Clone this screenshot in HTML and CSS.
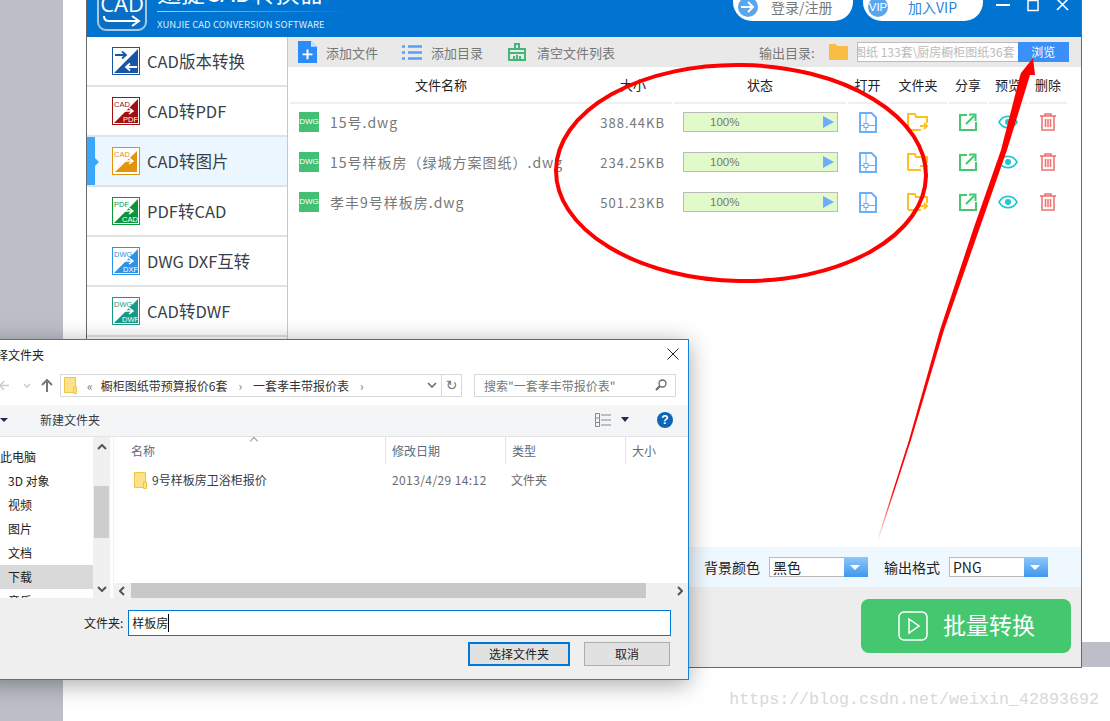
FILE: index.html

```html
<!DOCTYPE html>
<html lang="en">
<head>
  <meta charset="UTF-8">
  <title>迅捷CAD转换器</title>
  <link rel="stylesheet" href="styles.css">
</head>
<body>

<svg class="defs" width="0" height="0">
  <symbol id="i-open" viewBox="0 0 18 21"><path d="M1 1h11.500L17 5.500V20H1z" fill="none" stroke="#6aaefc" stroke-width="2"/><path d="M1 13.500h4M9 13.500h8M7 1v10M7 16v4" fill="none" stroke="#6aaefc"/><rect x="5" y="11.500" width="4" height="4" fill="#fff" stroke="#6aaefc"/></symbol>
  <symbol id="i-folder" viewBox="0 0 22 19"><path d="M1 17V1h7l1 3h11v6M1 17h13" fill="none" stroke="#ffc01f" stroke-width="2"/><path d="M13 13h6M17 10l3 3-3 3" fill="none" stroke="#ffc01f" stroke-width="2"/></symbol>
  <symbol id="i-share" viewBox="0 0 18 18"><path d="M8 2H1v15h16V9" fill="none" stroke="#44c76f" stroke-width="2"/><path d="M7 11l8-8M10 1.500h6.500V8" fill="none" stroke="#44c76f" stroke-width="2"/></symbol>
  <symbol id="i-eye" viewBox="0 0 20 14"><path d="M1 7c4-7.500 14-7.500 18 0-4 7.500-14 7.500-18 0z" fill="none" stroke="#20c6d2" stroke-width="1.600"/><circle cx="10" cy="7" r="3" fill="#20c6d2"/></symbol>
  <symbol id="i-trash" viewBox="0 0 16 18"><path d="M0 3h16M5 3V1h6v2M2 3v14h12V3M5.500 6v8M8 6v8M10.500 6v8" fill="none" stroke="#ef6c6c" stroke-width="1.500"/></symbol>
  <symbol id="i-yellow" viewBox="0 0 13 17"><path d="M.5.500h11v15H.5z" fill="#fde28c" stroke="#eec544"/><path d="M9.500 10h3v6.500h-3z" fill="#fde28c" stroke="#eec544"/></symbol>
</svg>

<div class="app">
  <header class="app-head">
    <div class="logo">
      <span class="logo-text">CAD</span>
      <svg width="40" height="12" viewBox="0 0 40 12"><path d="M2 1c0 4 2 5 5 5h28M30 1l7 5-7 5" fill="none" stroke="#fff" stroke-width="2"/></svg>
    </div>
    <div class="brand">
      <div class="brand-name">迅捷CAD转换器</div>
      <div class="brand-sub">XUNJIE CAD CONVERSION SOFTWARE</div>
    </div>
    <div class="pills">
      <div class="pill">
        <span class="pill-dot"><svg width="14" height="12" viewBox="0 0 14 12"><path d="M0 6h12M7 1l5 5-5 5" fill="none" stroke="#fff" stroke-width="2"/></svg></span>
        <span class="pill-login">登录/注册</span>
      </div>
      <div class="pill">
        <span class="pill-dot pill-vip">VIP</span>
        <span class="pill-join">加入VIP</span>
      </div>
    </div>
    <div class="win-btns">
      <svg width="14" height="14" viewBox="0 0 14 14"><path d="M0 7h14" stroke="#fff" stroke-width="2"/></svg>
      <svg width="12" height="14" viewBox="0 0 12 14"><path d="M1 2.500h10v10H1z" fill="none" stroke="#fff" stroke-width="1.500"/></svg>
      <svg width="13" height="14" viewBox="0 0 13 14"><path d="M1 1l11 11M12 1L1 12" stroke="#fff" stroke-width="1.600"/></svg>
    </div>
  </header>

  <div class="app-body">
    <nav class="side">
      <div class="side-item">
        <svg class="side-icon" viewBox="0 0 28 28"><rect x=".5" y=".5" width="27" height="27" fill="#fff" stroke="#1756a5"/><path d="M26 2v24H2z" fill="#1756a5"/><path d="M3 8h11M10 4.500L14 8l-4 3.500" fill="none" stroke="#1756a5" stroke-width="1.800"/><path d="M25 20H14M18 16.500L14 20l4 3.500" fill="none" stroke="#fff" stroke-width="1.800"/></svg>
        <span>CAD版本转换</span>
      </div>
      <div class="side-item">
        <svg class="side-icon" viewBox="0 0 28 28"><rect x=".5" y=".5" width="27" height="27" fill="#fff" stroke="#a30e0e"/><path d="M26 2v24H2z" fill="#a30e0e"/><text x="2" y="9.500" class="ico-label" fill="#a30e0e">CAD</text><text x="11" y="25" class="ico-label" fill="#fff">PDF</text><path d="M5 14h16M17 11l4 3-4 3" fill="none" stroke="#fff" stroke-width="1.500"/></svg>
        <span>CAD转PDF</span>
      </div>
      <div class="side-item active">
        <svg class="side-icon" viewBox="0 0 28 28"><rect x=".5" y=".5" width="27" height="27" fill="#fff" stroke="#e3930c"/><path d="M25 4v21H3z" fill="#e3930c"/><text x="2" y="9.500" class="ico-label" fill="#e3930c">CAD</text><path d="M5 14h16M17 11l4 3-4 3" fill="none" stroke="#fff" stroke-width="1.500"/></svg>
        <span>CAD转图片</span>
      </div>
      <div class="side-item">
        <svg class="side-icon" viewBox="0 0 28 28"><rect x=".5" y=".5" width="27" height="27" fill="#fff" stroke="#0d9639"/><path d="M26 2v24H2z" fill="#0d9639"/><text x="2" y="9.500" class="ico-label" fill="#0d9639">PDF</text><text x="10" y="25" class="ico-label" fill="#fff">CAD</text><path d="M5 14h16M17 11l4 3-4 3" fill="none" stroke="#fff" stroke-width="1.500"/></svg>
        <span>PDF转CAD</span>
      </div>
      <div class="side-item">
        <svg class="side-icon" viewBox="0 0 28 28"><rect x=".5" y=".5" width="27" height="27" fill="#fff" stroke="#2b94e6"/><path d="M26 2v24H2z" fill="#2b94e6"/><text x="2" y="9.500" class="ico-label" fill="#2b94e6">DWG</text><text x="11" y="25" class="ico-label" fill="#fff">DXF</text><path d="M5 14h16M17 11l4 3-4 3" fill="none" stroke="#fff" stroke-width="1.500"/></svg>
        <span>DWG DXF互转</span>
      </div>
      <div class="side-item">
        <svg class="side-icon" viewBox="0 0 28 28"><rect x=".5" y=".5" width="27" height="27" fill="#fff" stroke="#179a8a"/><path d="M26 2v24H2z" fill="#179a8a"/><text x="2" y="9.500" class="ico-label" fill="#179a8a">DWG</text><text x="10" y="25" class="ico-label" fill="#fff">DWF</text><path d="M5 14h16M17 11l4 3-4 3" fill="none" stroke="#fff" stroke-width="1.500"/></svg>
        <span>CAD转DWF</span>
      </div>
    </nav>

    <main class="content">
      <div class="toolbar">
        <svg class="tool-add" width="19" height="22" viewBox="0 0 19 23" preserveAspectRatio="none"><path d="M0 0h13l6 6v17H0z" fill="#2b8cf7"/><path d="M13 0l6 6h-6z" fill="#cfe4fd"/><path d="M9.500 9v10M4.500 14h10" stroke="#fff" stroke-width="2"/></svg>
        <span class="tool-text">添加文件</span>
        <svg class="tool-list" width="20" height="15" viewBox="0 0 20 15"><path d="M0 1.500h3M6 1.500h14M0 7.500h3M6 7.500h14M0 13.500h3M6 13.500h14" stroke="#5b9ef5" stroke-width="2.500"/></svg>
        <span class="tool-text">添加目录</span>
        <svg class="tool-broom" width="18" height="18" viewBox="0 0 18 18"><path d="M7 6V1h4v5M1 17V6h16v11zM1 10h16M6 17v-4M9 17v-5M12 17v-4" fill="none" stroke="#44b678" stroke-width="2"/></svg>
        <span class="tool-text">清空文件列表</span>
        <span class="out-label">输出目录:</span>
        <svg class="out-folder" width="19" height="16" viewBox="0 0 19 16"><path d="M0 0h7l1 2h11v14H0z" fill="#fbbc45"/></svg>
        <div class="out-path"><span>橱柜图纸 133套\厨房橱柜图纸36套</span></div>
        <div class="out-browse">浏览</div>
      </div>

      <div class="grid grid-head">
        <div>文件名称</div><div>大小</div><div>状态</div><div>打开</div><div>文件夹</div><div>分享</div><div>预览</div><div>删除</div>
      </div>

      <div class="grid row">
        <div class="name"><span class="dwg">DWG</span>15号.dwg</div>
        <div class="size">388.44KB</div>
        <div class="status"><div class="bar"><span>100%</span><i></i></div></div>
        <div><svg class="ic-open"><use href="#i-open"/></svg></div>
        <div><svg class="ic-folder"><use href="#i-folder"/></svg></div>
        <div><svg class="ic-share"><use href="#i-share"/></svg></div>
        <div><svg class="ic-eye"><use href="#i-eye"/></svg></div>
        <div><svg class="ic-trash"><use href="#i-trash"/></svg></div>
      </div>
      <div class="grid row">
        <div class="name"><span class="dwg">DWG</span>15号样板房（绿城方案图纸）.dwg</div>
        <div class="size">234.25KB</div>
        <div class="status"><div class="bar"><span>100%</span><i></i></div></div>
        <div><svg class="ic-open"><use href="#i-open"/></svg></div>
        <div><svg class="ic-folder"><use href="#i-folder"/></svg></div>
        <div><svg class="ic-share"><use href="#i-share"/></svg></div>
        <div><svg class="ic-eye"><use href="#i-eye"/></svg></div>
        <div><svg class="ic-trash"><use href="#i-trash"/></svg></div>
      </div>
      <div class="grid row">
        <div class="name"><span class="dwg">DWG</span>孝丰9号样板房.dwg</div>
        <div class="size">501.23KB</div>
        <div class="status"><div class="bar"><span>100%</span><i></i></div></div>
        <div><svg class="ic-open"><use href="#i-open"/></svg></div>
        <div><svg class="ic-folder"><use href="#i-folder"/></svg></div>
        <div><svg class="ic-share"><use href="#i-share"/></svg></div>
        <div><svg class="ic-eye"><use href="#i-eye"/></svg></div>
        <div><svg class="ic-trash"><use href="#i-trash"/></svg></div>
      </div>

      <div class="options">
        <span>背景颜色</span>
        <div class="select"><span>黑色</span><i></i></div>
        <span class="opt-gap">输出格式</span>
        <div class="select"><span>PNG</span><i></i></div>
      </div>
      <div class="action">
        <div class="go">
          <svg width="30" height="30" viewBox="0 0 30 30"><rect x="1" y="1" width="28" height="28" rx="5" fill="none" stroke="#fff" stroke-width="1.500"/><path d="M11 8l10 7-10 7z" fill="none" stroke="#fff" stroke-width="1.500"/></svg>
          <span>批量转换</span>
        </div>
      </div>
    </main>
  </div>
</div>

<!-- red marks drawn on the screenshot -->
<svg class="marks" width="1110" height="721" viewBox="0 0 1110 721">
  <defs>
    <linearGradient id="fade" gradientUnits="userSpaceOnUse" x1="0" y1="490" x2="0" y2="542">
      <stop offset="0" stop-color="#f00"/>
      <stop offset="1" stop-color="#f00" stop-opacity="0"/>
    </linearGradient>
  </defs>
  <ellipse cx="741" cy="173" rx="185" ry="108" transform="rotate(1 741 173)" fill="none" stroke="#f00" stroke-width="4"/>
  <path d="M1033 58L1035 75 1030 75 1007 150 979 230 944 330 911 440 878 541 877 541 909 440 940 330 973 230 1001 150 1020 76 1021 73z" fill="url(#fade)"/>
</svg>

<div class="dialog">
  <div class="dlg-title">
    <span>选择文件夹</span>
    <svg width="12" height="12" viewBox="0 0 12 12"><path d="M.5.500l11 11M11.500.500l-11 11" stroke="#222"/></svg>
  </div>
  <div class="dlg-nav">
    <svg class="nav-back" width="10" height="11" viewBox="0 0 10 11"><path d="M10 5.500H1M5 1L1 5.500 5 10" fill="none" stroke="#ccc" stroke-width="1.500"/></svg>
    <svg class="nav-drop" width="8" height="5" viewBox="0 0 8 5"><path d="M1 1l3 3 3-3" fill="none" stroke="#ccc" stroke-width="1.500"/></svg>
    <svg class="nav-up" width="12" height="13" viewBox="0 0 12 13"><path d="M6 13V1M1 6l5-5 5 5" fill="none" stroke="#777" stroke-width="2"/></svg>
    <div class="crumbs">
      <svg class="folder-y"><use href="#i-yellow"/></svg>
      <span class="crumb-more">«</span>
      <span>橱柜图纸带预算报价6套</span>
      <span class="crumb-sep">›</span>
      <span>一套孝丰带报价表</span>
      <span class="crumb-sep">›</span>
      <svg class="crumb-drop" width="10" height="6" viewBox="0 0 10 6"><path d="M1 1l4 4 4-4" fill="none" stroke="#666" stroke-width="1.500"/></svg>
      <span class="crumb-refresh">↻</span>
    </div>
    <div class="search">
      <span>搜索"一套孝丰带报价表"</span>
      <svg width="12" height="12" viewBox="0 0 12 12"><circle cx="7.500" cy="4.500" r="3.500" fill="none" stroke="#666" stroke-width="1.300"/><path d="M5 7l-4 4" stroke="#666" stroke-width="2"/></svg>
    </div>
  </div>
  <div class="dlg-cmd">
    <span class="cmd-caret"></span>
    <span class="cmd-new">新建文件夹</span>
    <svg class="cmd-view" width="16" height="14" viewBox="0 0 16 14"><path d="M.5.500h4v13h-4zM.5 5h4M.5 9.500h4M6 2h10M6 7h10M6 12h10" fill="none" stroke="#888"/></svg>
    <span class="cmd-caret cmd-caret-b"></span>
    <span class="help">?</span>
  </div>
  <div class="dlg-main">
    <div class="tree">
      <div class="tree-item">此电脑</div>
      <div class="tree-item">3D 对象</div>
      <div class="tree-item">视频</div>
      <div class="tree-item">图片</div>
      <div class="tree-item">文档</div>
      <div class="tree-item selected">下载</div>
      <div class="tree-item">音乐</div>
    </div>
    <div class="tree-scroll">
      <svg class="arr-up" width="10" height="6" viewBox="0 0 10 6"><path d="M1 5l4-4 4 4" fill="none" stroke="#555" stroke-width="2"/></svg>
      <div class="thumb-v"></div>
      <svg class="arr-down" width="10" height="6" viewBox="0 0 10 6"><path d="M1 1l4 4 4-4" fill="none" stroke="#555" stroke-width="2"/></svg>
    </div>
    <div class="files">
      <span class="sort-caret"></span>
      <div class="cols cols-head">
        <div>名称</div><div>修改日期</div><div>类型</div><div>大小</div>
      </div>
      <div class="cols file-row">
        <div class="file-name"><svg class="folder-y"><use href="#i-yellow"/></svg>9号样板房卫浴柜报价</div>
        <div class="file-date">2013/4/29 14:12</div>
        <div>文件夹</div>
        <div></div>
      </div>
      <div class="h-scroll">
        <svg class="arr-left" width="6" height="10" viewBox="0 0 6 10"><path d="M5 1L1 5l4 4" fill="none" stroke="#555" stroke-width="2"/></svg>
        <div class="thumb-h"></div>
        <svg class="arr-right" width="6" height="10" viewBox="0 0 6 10"><path d="M1 1l4 4-4 4" fill="none" stroke="#555" stroke-width="2"/></svg>
      </div>
    </div>
  </div>
  <div class="dlg-foot">
    <div class="foot-line">
      <span>文件夹:</span>
      <div class="foot-input">样板房<i></i></div>
    </div>
    <div class="foot-btns">
      <div class="btn btn-main">选择文件夹</div>
      <div class="btn">取消</div>
    </div>
  </div>
</div>

<div class="watermark">https://blog.csdn.net/weixin_42893692</div>

</body>
</html>
```

FILE: styles.css

```css
* {
  box-sizing: border-box;
}
html, body {
  margin: 0;
  height: 100%;
}
body {
  position: relative;
  width: 1110px;
  height: 721px;
  overflow: hidden;
  background: linear-gradient(90deg, #bcbfc8 63px, #fff 63px);
  font-family: "Noto Sans CJK SC", "Liberation Sans", sans-serif;
  color: #333;
}
.defs {
  position: absolute;
}
body::after {
  content: "";
  position: absolute;
  left: 1082px;
  top: 642px;
  width: 28px;
  height: 25px;
  background: #bcbfc8;
}

/* app window */
.app {
  position: absolute;
  left: 86px;
  top: -38px;
  width: 996px;
  height: 706px;
  display: flex;
  flex-direction: column;
  background: #fff;
  border: 1px solid #6a6a6a;
  border-top: 0;
}
.app-head {
  height: 75px;
  flex: none;
  display: flex;
  background: #0074d0;
  color: #fff;
  padding-left: 10px;
}
.logo {
  width: 50px;
  height: 51px;
  margin-top: 18px;
  padding-top: 7px;
  border: 2px solid #a9c7e2;
  border-radius: 9px;
  background: #0a6fc4;
  display: flex;
  flex-direction: column;
  align-items: center;
}
.logo-text {
  font-size: 22px;
  line-height: 29px;
  font-family: "Open Sans", sans-serif;
}
.logo svg {
  margin-top: -3px;
  flex: none;
}
.brand {
  margin-left: 10px;
  width: 250px;
  padding-top: 13px;
}
.brand-name {
  font-size: 24px;
  line-height: 33px;
  padding-bottom: 3px;
  border-bottom: 1px solid;
  border-image: linear-gradient(90deg, #a9d0f0, #0074d0) 1;
  width: 190px;
  white-space: nowrap;
}
.brand-sub {
  font-size: 9.500px;
  line-height: 16px;
  margin-top: 4px;
  letter-spacing: .07px;
  white-space: nowrap;
  color: #dcecf9;
}
.pills {
  display: flex;
  gap: 10px;
  margin-left: 326px;
  margin-top: 20px;
}
.pill {
  width: 120px;
  height: 39px;
  border-radius: 19px;
  background: #fff;
  display: flex;
  align-items: flex-end;
  padding: 0 0 5px 5px;
  font-size: 14px;
  line-height: 18px;
  position: relative;
}
.pill-dot {
  position: absolute;
  left: 5px;
  top: 15px;
  width: 20px;
  height: 20px;
  line-height: 20px;
  border-radius: 50%;
  background: #5aa6ee;
  display: flex;
  align-items: center;
  justify-content: center;
}
.pill-vip {
  color: #fff;
  font-size: 11.500px;
  font-family: "Liberation Sans", sans-serif;
}
.pill-login {
  margin-left: 33px;
  color: #777;
}
.pill-join {
  margin-left: 40px;
  color: #2a87dd;
}
.win-btns {
  display: flex;
  gap: 17px;
  margin-left: 13px;
  margin-top: 36px;
  height: 14px;
}

.app-body {
  flex: 1;
  display: flex;
  min-height: 0;
}
.side {
  width: 201px;
  flex: none;
  border-right: 1px solid #c8c8c8;
}
.side-item {
  height: 50px;
  display: flex;
  align-items: center;
  gap: 7px;
  padding-left: 25px;
  font-size: 16.500px;
  color: #3a3f4a;
  border-bottom: 2px solid #e2e2e2;
  position: relative;
}
.side-item.active {
  background: #ebf6fe;
}
.side-item.active::before {
  content: "";
  position: absolute;
  left: 0;
  top: 0;
  bottom: 0;
  width: 8px;
  background: #39a7fb;
}
.side-item.active::after {
  content: "";
  position: absolute;
  left: 8px;
  top: 21px;
  border: 4px solid transparent;
  border-left-color: #39a7fb;
}
.side-icon {
  width: 28px;
  height: 28px;
  flex: none;
}
.ico-label {
  font-family: "Liberation Sans", sans-serif;
  font-size: 7.500px;
}

/* right panel */
.content {
  flex: 1;
  display: flex;
  flex-direction: column;
  min-width: 0;
}
.toolbar {
  height: 30px;
  flex: none;
  background: #e9e9e9;
  display: flex;
  align-items: center;
  padding-left: 10px;
  font-size: 13px;
  color: #777;
}
.tool-text {
  white-space: nowrap;
}
.tool-add {
  margin-right: 9px;
}
.tool-list {
  margin: 0 9px 0 24px;
}
.tool-broom {
  margin: 0 11px 0 25px;
}
.out-label {
  margin-left: 144px;
  white-space: nowrap;
}
.out-folder {
  margin-left: 14px;
}
.out-path {
  margin-left: 9px;
  width: 161px;
  height: 20px;
  background: #fff;
  border: 1px solid #bbb;
  border-right: 0;
  font-size: 12px;
  line-height: 18px;
  color: #bbb;
  overflow: hidden;
  white-space: nowrap;
  display: flex;
  justify-content: flex-end;
  padding-right: 3px;
}
.out-path span {
  flex: none;
}
.out-browse {
  width: 51px;
  height: 20px;
  background: #3a90f8;
  color: #fff;
  font-size: 12px;
  line-height: 20px;
  text-align: center;
}
.grid {
  display: grid;
  grid-template-columns: 302px 78px 172px 39px 58px 38px 38px 38px;
  column-gap: 2px;
  margin-left: 2px;
  width: 777px;
  flex: none;
}
.grid-head {
  height: 35px;
  font-size: 13px;
  line-height: 35px;
  text-align: center;
  color: #222;
}
.grid-head > div {
  border-bottom: 2px solid #f0f0f0;
}
.row {
  height: 40px;
  align-items: center;
  justify-items: center;
}
.name {
  justify-self: start;
  display: flex;
  align-items: center;
  font-size: 14px;
  letter-spacing: 1px;
  color: #777;
  padding-left: 9px;
  white-space: nowrap;
}
.dwg {
  width: 20px;
  height: 20px;
  margin-right: 11px;
  background: #44c076;
  color: #fff;
  font-size: 8px;
  line-height: 20px;
  text-align: center;
  letter-spacing: 0;
  font-family: "Liberation Sans", sans-serif;
}
.size {
  justify-self: end;
  padding-right: 7px;
  font-size: 13px;
  letter-spacing: 1px;
  color: #777;
  white-space: nowrap;
}
.status {
  justify-self: start;
  padding-left: 9px;
}
.bar {
  width: 155px;
  height: 20px;
  border: 1px solid #bbb;
  background: #e2fac9;
  display: flex;
  align-items: center;
  justify-content: space-between;
  padding: 0 3px 0 26px;
  font-size: 11.500px;
  color: #777;
  font-family: "Liberation Sans", sans-serif;
}
.bar i {
  border: 6.500px solid transparent;
  border-left: 11px solid #6daefc;
  border-right: 0;
}
.row svg {
  display: block;
}
.ic-open {
  width: 18px;
  height: 21px;
}
.ic-folder {
  width: 22px;
  height: 19px;
}
.ic-share {
  width: 18px;
  height: 18px;
}
.ic-eye {
  width: 20px;
  height: 14px;
}
.ic-trash {
  width: 16px;
  height: 18px;
}

.options {
  margin-top: auto;
  height: 40px;
  flex: none;
  background: #f0f8ff;
  display: flex;
  align-items: center;
  justify-content: flex-end;
  padding-right: 33px;
  font-size: 14px;
  color: #222;
  gap: 9px;
}
.opt-gap {
  margin-left: 7px;
}
.select {
  width: 99px;
  height: 20px;
  display: flex;
  justify-content: space-between;
  background: #fff;
  border: 1px solid #bbb;
  font-size: 14px;
  line-height: 18px;
  padding-left: 3px;
}
.select i {
  width: 24px;
  height: 20px;
  margin-top: -1px;
  margin-right: -1px;
  background: linear-gradient(#8ec7fb, #3f97ee);
  position: relative;
}
.select i::after {
  content: "";
  position: absolute;
  left: 6px;
  top: 8px;
  border: 5px solid transparent;
  border-top: 5px solid #fff;
  border-bottom: 0;
}
.action {
  height: 80px;
  flex: none;
  background: #ededed;
  display: flex;
  justify-content: flex-end;
  padding: 12px 10px 0 0;
}
.go {
  width: 210px;
  height: 54px;
  border-radius: 8px;
  background: #44c76f;
  color: #fff;
  display: flex;
  align-items: center;
  gap: 15px;
  padding-left: 37px;
  font-size: 23px;
}
.go span {
  margin-top: -4px;
}

/* annotation over the app */
.marks {
  position: absolute;
  left: 0;
  top: 0;
}

/* folder dialog */
.dialog {
  position: absolute;
  left: -20px;
  top: 339px;
  width: 709px;
  height: 341px;
  background: #fff;
  border: 1px solid #1683d8;
  box-shadow: 0 4px 22px rgba(0, 0, 0, .35);
  font-size: 12px;
  display: flex;
  flex-direction: column;
}
.dlg-title {
  height: 30px;
  flex: none;
  display: flex;
  justify-content: space-between;
  align-items: center;
  padding: 0 9px 2px 3px;
  color: #222;
}
.dlg-nav {
  height: 35px;
  flex: none;
  display: flex;
  align-items: center;
  padding: 0 12px 5px 0;
}
.nav-back {
  margin-left: 18px;
}
.nav-drop {
  margin-left: 14px;
}
.nav-up {
  margin-left: 10px;
}
.crumbs {
  margin-left: 7px;
  width: 402px;
  height: 23px;
  border: 1px solid #d9d9d9;
  display: flex;
  align-items: center;
  padding-left: 3px;
  gap: 8px;
  color: #333;
  white-space: nowrap;
}
.folder-y {
  width: 13px;
  height: 17px;
  flex: none;
}
.crumb-more {
  color: #777;
  margin-left: 2px;
}
.crumb-sep {
  color: #777;
  margin: 0 3px;
}
.crumb-drop {
  margin-left: auto;
}
.crumb-refresh {
  width: 20px;
  height: 21px;
  border-left: 1px solid #d9d9d9;
  text-align: center;
  font-size: 14px;
  line-height: 20px;
  color: #777;
  font-family: "DejaVu Sans", sans-serif;
  margin-left: -4px;
}
.search {
  margin-left: 12px;
  width: 202px;
  height: 23px;
  border: 1px solid #d9d9d9;
  display: flex;
  align-items: center;
  justify-content: space-between;
  padding: 0 8px 0 9px;
  color: #777;
  white-space: nowrap;
}
.dlg-cmd {
  height: 32px;
  flex: none;
  background: #f4f5f7;
  border-bottom: 1px solid #e4e4e4;
  display: flex;
  align-items: center;
  padding-bottom: 2px;
  color: #333c4c;
}
.cmd-caret {
  margin-left: 19px;
  border: 4px solid transparent;
  border-top: 4px solid #1d2b4c;
  border-bottom: 0;
}
.cmd-new {
  margin-left: 32px;
}
.cmd-view {
  margin-left: 495px;
}
.cmd-caret-b {
  margin-left: 10px;
  border-width: 5px 4px 0;
}
.help {
  margin-left: 28px;
  width: 16px;
  height: 16px;
  border-radius: 50%;
  background: #0c65b8;
  color: #fff;
  font: bold 12px/16px "Liberation Sans", sans-serif;
  text-align: center;
}
.dlg-main {
  height: 161px;
  flex: none;
  display: flex;
  overflow: hidden;
}
.tree {
  width: 112px;
  flex: none;
  padding-top: 8px;
}
.tree-item {
  height: 24px;
  line-height: 24px;
  padding-left: 27px;
  color: #222;
  white-space: nowrap;
}
.tree-item:first-child {
  padding-left: 19px;
}
.selected {
  background: #d9d9d9;
}
.tree-scroll {
  width: 18px;
  flex: none;
  background: #f0f0f0;
  border-right: 1px solid #fafafa;
  display: flex;
  flex-direction: column;
  align-items: center;
}
.arr-up {
  margin-top: 7px;
}
.thumb-v {
  width: 15px;
  height: 52px;
  margin-top: 36px;
  background: #cdcdcd;
}
.arr-down {
  margin-top: 48px;
}
.files {
  flex: 1;
  position: relative;
  display: flex;
  flex-direction: column;
  min-width: 0;
  margin-left: 2px;
  border-left: 1px solid #f2f2f2;
}
.sort-caret {
  position: absolute;
  left: 137px;
  top: 1px;
  width: 6px;
  height: 6px;
  border-top: 1px solid #999;
  border-left: 1px solid #999;
  transform: rotate(45deg);
}
.cols {
  display: grid;
  grid-template-columns: 271px 120px 120px 1fr;
  flex: none;
}
.cols-head {
  height: 27px;
  line-height: 27px;
  color: #5a6b80;
}
.cols-head > div {
  padding-left: 17px;
}
.cols-head > div + div {
  border-left: 1px solid #e4e4e4;
  padding-left: 6px;
}
.file-row {
  margin-top: 4px;
  height: 24px;
  line-height: 24px;
  color: #6a6a6a;
}
.file-row > div {
  padding-left: 6px;
}
.file-row > div.file-name {
  display: flex;
  align-items: center;
  gap: 5px;
  padding-left: 20px;
  color: #333c4c;
}
.file-row > div.file-date {
  padding-left: 7px;
  letter-spacing: .4px;
  white-space: nowrap;
}
.h-scroll {
  margin-top: auto;
  height: 15px;
  flex: none;
  background: #f0f0f0;
  display: flex;
  align-items: center;
}
.arr-left {
  margin-left: 5px;
}
.thumb-h {
  width: 515px;
  height: 15px;
  margin-left: 6px;
  background: #c8c8c8;
}
.arr-right {
  margin-left: auto;
  margin-right: 5px;
}
.dlg-foot {
  flex: 1;
  background: #efefef;
  padding-top: 12px;
}
.foot-line {
  display: flex;
  align-items: center;
  gap: 5px;
  padding-left: 103px;
  color: #222;
}
.foot-line span {
  margin-top: -2px;
}
.foot-input {
  width: 543px;
  height: 26px;
  background: #fff;
  border: 1px solid #0078d7;
  line-height: 22px;
  padding-left: 3px;
  display: flex;
  align-items: center;
}
.foot-input i {
  width: 1px;
  height: 18px;
  background: #000;
}
.foot-btns {
  display: flex;
  gap: 14px;
  margin-top: 6px;
  padding-left: 487px;
}
.btn {
  width: 86px;
  height: 24px;
  border: 1px solid #adadad;
  background: #e1e1e1;
  line-height: 22px;
  text-align: center;
  color: #222;
}
.btn-main {
  width: 102px;
  border: 2px solid #0078d7;
  line-height: 20px;
}

.watermark {
  position: absolute;
  right: 11px;
  top: 690px;
  font-family: "Liberation Mono", monospace;
  font-size: 16.670px;
  line-height: 20px;
  color: #d8d8d8;
}
```
